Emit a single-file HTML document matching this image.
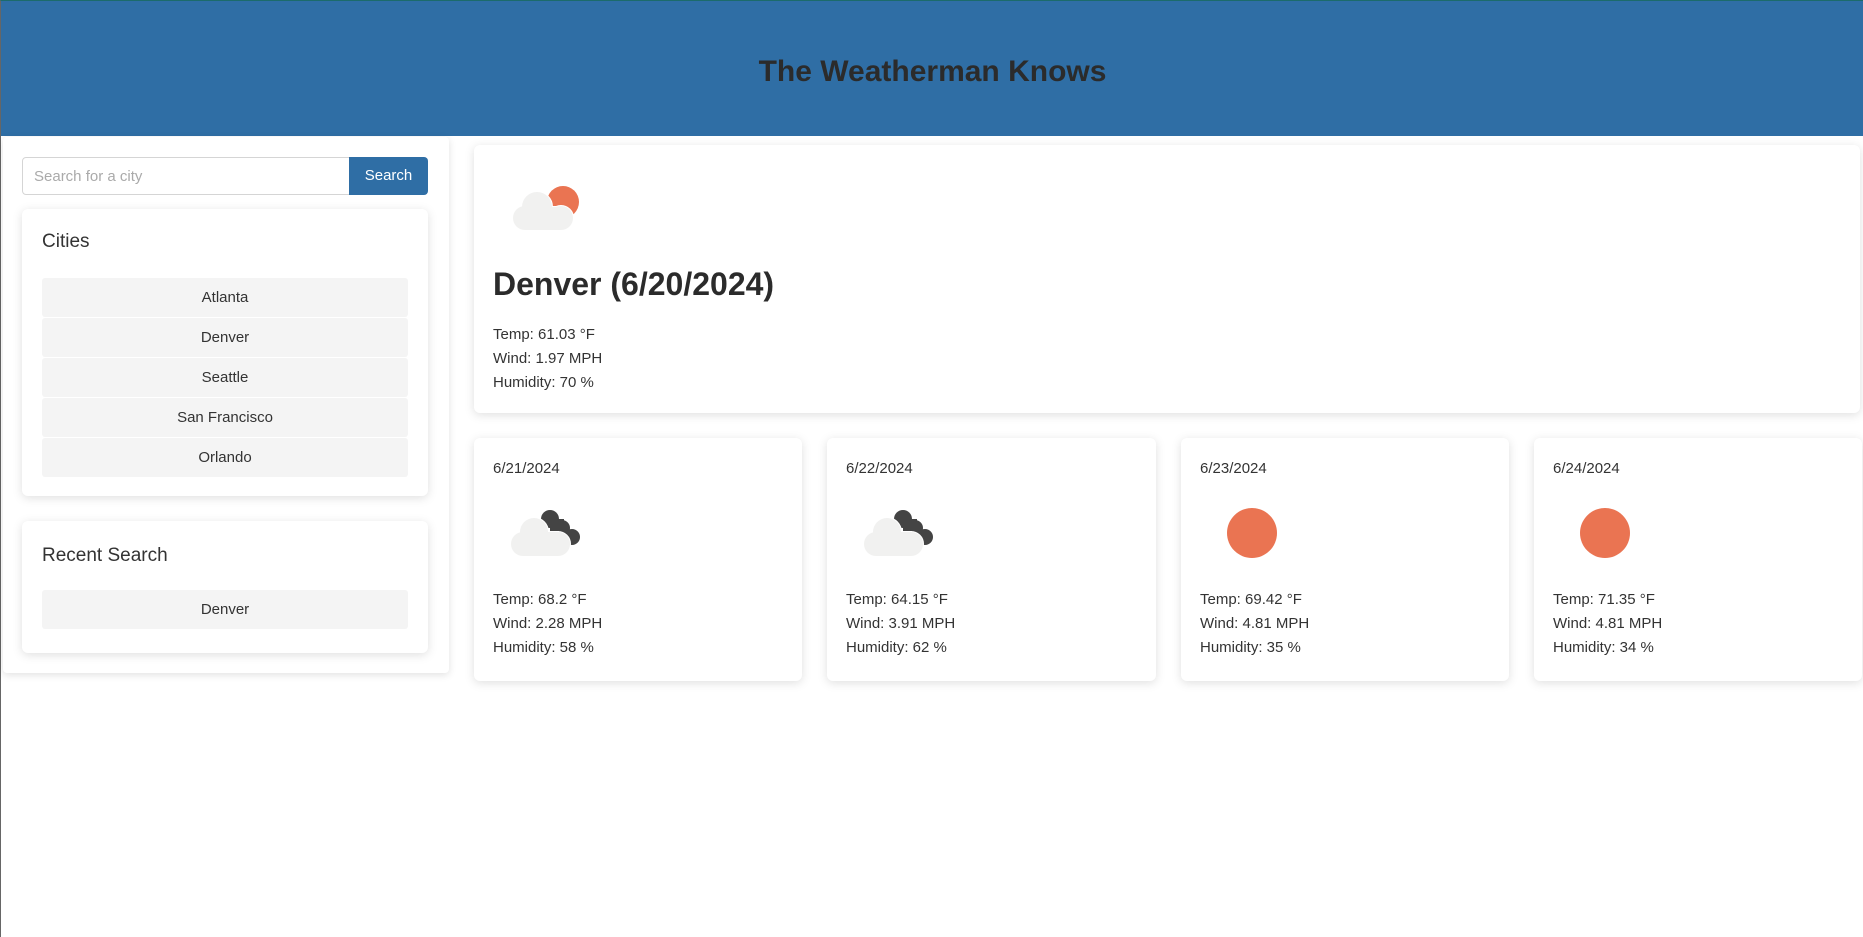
<!DOCTYPE html>
<html><head><meta charset="utf-8"><style>
*{box-sizing:border-box;margin:0;padding:0}
html,body{width:1863px;height:937px;background:#fff;font-family:"Liberation Sans",sans-serif;color:#333;overflow:hidden;position:relative}
body{border-left:1px solid #666;border-top:1px solid #1c6b6b}
.hdr{position:absolute;left:0;top:0;width:1863px;height:135px;background:#2f6ea5;text-align:center}
.hdr h1{font-size:30px;font-weight:bold;color:#2b2b2b;line-height:142px}
.side{position:absolute;left:2px;top:136px;width:446px;height:536px;background:#fff;box-shadow:0 2px 8px rgba(0,0,0,.12);border-radius:4px}
.inp{position:absolute;left:21px;top:156px;width:328px;height:38px;border:1px solid #d5d5d5;border-radius:4px 0 0 4px;font-size:15px;color:#aaa;padding:10px 11px}
.btn{position:absolute;left:348px;top:156px;width:79px;height:38px;background:#2f6ea5;color:#fff;border-radius:0 4px 4px 0;font-size:15px;text-align:center;line-height:38px}
.card{position:absolute;background:#fff;border-radius:6px;box-shadow:0 2px 10px rgba(0,0,0,.13)}
.ttl{position:absolute;left:20px;font-size:19px;color:#333}
.item{position:absolute;left:20px;width:366px;height:39px;background:#f4f4f4;border-radius:3px;text-align:center;line-height:39px;font-size:15px;color:#333}
.main h2{position:absolute;left:19px;top:121px;font-size:32px;font-weight:bold;color:#2b2b2b}
.txt{position:absolute;left:19px;font-size:15px;line-height:24px;color:#333}
.fc .d{position:absolute;left:19px;top:22px;font-size:15px}
svg{position:absolute}
</style></head><body>
<div class="hdr"><h1>The Weatherman Knows</h1></div>
<div class="side"></div>
<div class="inp">Search for a city</div>
<div class="btn">Search</div>
<div class="card" style="left:21px;top:208px;width:406px;height:287px">
<div class="ttl" style="top:22px">Cities</div>
<div class="item" style="top:69px">Atlanta</div>
<div class="item" style="top:109px">Denver</div>
<div class="item" style="top:149px">Seattle</div>
<div class="item" style="top:189px">San Francisco</div>
<div class="item" style="top:229px">Orlando</div>
</div>
<div class="card" style="left:21px;top:520px;width:406px;height:132px">
<div class="ttl" style="top:24px">Recent Search</div>
<div class="item" style="top:69px">Denver</div>
</div>
<div class="card main" style="left:473px;top:144px;width:1386px;height:268px">
<svg style="left:35px;top:40px" width="80" height="50" viewBox="0 0 80 50">
<circle cx="54" cy="17" r="16" fill="#ea7452"/>
<g fill="#f1f1f0" stroke="#fff" stroke-width="2"><circle cx="28" cy="22" r="15"/><circle cx="16" cy="33" r="12"/><circle cx="52" cy="33" r="12"/><rect x="16" y="22" width="36" height="23"/></g>
<g fill="#f1f1f0"><circle cx="28" cy="22" r="15"/><circle cx="16" cy="33" r="12"/><circle cx="52" cy="33" r="12"/><rect x="16" y="22" width="36" height="23"/></g>
</svg>
<h2>Denver (6/20/2024)</h2>
<div class="txt" style="top:178px">Temp: 61.03 °F<br>Wind: 1.97 MPH<br>Humidity: 70 %</div>
</div>
<div class="card fc" style="left:473px;top:437px;width:328px;height:243px"><div class="d">6/21/2024</div>
<svg style="left:36px;top:72px" width="80" height="50" viewBox="0 0 80 50"><g fill="#444"><circle cx="40" cy="9" r="9"/><circle cx="52" cy="18" r="8"/><circle cx="62" cy="27" r="8"/><rect x="40" y="9" width="14" height="20"/></g><g fill="#f1f1f0" stroke="#fff" stroke-width="2"><circle cx="24" cy="22" r="14"/><circle cx="13" cy="34" r="12"/><circle cx="48" cy="34" r="12"/><rect x="13" y="22" width="35" height="24"/></g><g fill="#f1f1f0"><circle cx="24" cy="22" r="14"/><circle cx="13" cy="34" r="12"/><circle cx="48" cy="34" r="12"/><rect x="13" y="22" width="35" height="24"/></g></svg>
<div class="txt" style="top:150px">Temp: 68.2 °F<br>Wind: 2.28 MPH<br>Humidity: 58 %</div></div>
<div class="card fc" style="left:826px;top:437px;width:329px;height:243px"><div class="d">6/22/2024</div>
<svg style="left:36px;top:72px" width="80" height="50" viewBox="0 0 80 50"><g fill="#444"><circle cx="40" cy="9" r="9"/><circle cx="52" cy="18" r="8"/><circle cx="62" cy="27" r="8"/><rect x="40" y="9" width="14" height="20"/></g><g fill="#f1f1f0" stroke="#fff" stroke-width="2"><circle cx="24" cy="22" r="14"/><circle cx="13" cy="34" r="12"/><circle cx="48" cy="34" r="12"/><rect x="13" y="22" width="35" height="24"/></g><g fill="#f1f1f0"><circle cx="24" cy="22" r="14"/><circle cx="13" cy="34" r="12"/><circle cx="48" cy="34" r="12"/><rect x="13" y="22" width="35" height="24"/></g></svg>
<div class="txt" style="top:150px">Temp: 64.15 °F<br>Wind: 3.91 MPH<br>Humidity: 62 %</div></div>
<div class="card fc" style="left:1180px;top:437px;width:328px;height:243px"><div class="d">6/23/2024</div>
<svg style="left:45px;top:69px" width="52" height="52"><circle cx="26" cy="26" r="25" fill="#ea7452"/></svg>
<div class="txt" style="top:150px">Temp: 69.42 °F<br>Wind: 4.81 MPH<br>Humidity: 35 %</div></div>
<div class="card fc" style="left:1533px;top:437px;width:328px;height:243px"><div class="d">6/24/2024</div>
<svg style="left:45px;top:69px" width="52" height="52"><circle cx="26" cy="26" r="25" fill="#ea7452"/></svg>
<div class="txt" style="top:150px">Temp: 71.35 °F<br>Wind: 4.81 MPH<br>Humidity: 34 %</div></div>
</body></html>
